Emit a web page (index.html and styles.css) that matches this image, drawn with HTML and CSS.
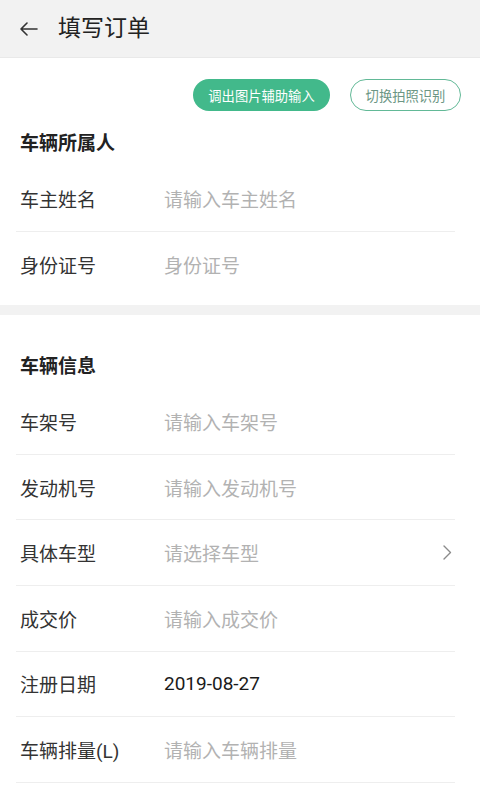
FILE: index.html
```html
<!DOCTYPE html>
<html lang="zh-CN">
<head>
<meta charset="utf-8">
<title>填写订单</title>
<link rel="stylesheet" href="styles.css">
</head>
<body>
<header class="topbar">
  <svg class="back" width="18" height="14" viewBox="0 0 18 14"><path d="M7 1 L1 7 L7 13 M1 7 H17" fill="none" stroke="#333" stroke-width="1.6" stroke-linecap="round" stroke-linejoin="round"/></svg>
  <h1 class="title">填写订单</h1>
</header>
<section class="card card-owner">
  <div class="actions">
    <button class="btn btn-fill">调出图片辅助输入</button>
    <button class="btn btn-line">切换拍照识别</button>
  </div>
  <h2 class="sec-title first">车辆所属人</h2>
  <div class="row"><span class="label">车主姓名</span><span class="ph">请输入车主姓名</span></div>
  <div class="row last"><span class="label">身份证号</span><span class="ph">身份证号</span></div>
</section>
<div class="band"></div>
<section class="card">
  <h2 class="sec-title">车辆信息</h2>
  <div class="row"><span class="label">车架号</span><span class="ph">请输入车架号</span></div>
  <div class="row"><span class="label">发动机号</span><span class="ph">请输入发动机号</span></div>
  <div class="row"><span class="label">具体车型</span><span class="ph">请选择车型</span>
    <svg class="chev" width="9" height="15" viewBox="0 0 9 15"><path d="M1 1 L7.5 7.5 L1 14" fill="none" stroke="#8a8a8a" stroke-width="1.4" stroke-linecap="round" stroke-linejoin="round"/></svg>
  </div>
  <div class="row"><span class="label">成交价</span><span class="ph">请输入成交价</span></div>
  <div class="row"><span class="label">注册日期</span><span class="val">2019-08-27</span></div>
  <div class="row"><span class="label">车辆排量(L)</span><span class="ph">请输入车辆排量</span></div>
</section>
</body>
</html>
```
FILE: styles.css
```css
* { box-sizing: border-box; }
html, body { margin: 0; padding: 0; }
body {
  width: 480px;
  height: 800px;
  overflow: hidden;
  background: #fff;
  font-family: Roboto, "Noto Sans CJK SC", sans-serif;
  color: #333;
}
.topbar {
  height: 58px;
  background: #f2f2f2;
  border-bottom: 1px solid #e9e9e9;
  display: flex;
  align-items: center;
  padding-left: 20px;
}
.back { display: block; margin-right: 20px; }
.title {
  margin: 0;
  font-size: 23px;
  font-weight: 400;
  color: #222;
  line-height: 28px;
}
.card { background: #fff; }
.card-owner { padding-bottom: 8px; }
.actions {
  display: flex;
  justify-content: flex-end;
  gap: 20px;
  padding: 21px 19px 0 0;
}
.btn {
  height: 32px;
  border-radius: 16px;
  font-family: inherit;
  font-size: 13.3px;
  padding: 0;
  display: flex;
  align-items: center;
  justify-content: center;
}
.btn-fill {
  width: 137px;
  background: #42b98b;
  border: none;
  color: #fff;
}
.btn-line {
  width: 111px;
  background: #fff;
  border: 1.5px solid #62b997;
  color: #6b9684;
}
.sec-title {
  margin: 0;
  font-size: 19px;
  font-weight: 700;
  color: #222;
  line-height: 24px;
  padding: 40px 0 10px 20px;
}
.sec-title.first { padding-top: 21px; }
.row {
  display: flex;
  align-items: center;
  height: 65.6px;
  margin: 0 25px 0 16px;
  padding: 0 3px 0 4px;
  border-bottom: 1px solid #eeeeee;
  font-size: 19px;
}
.row.last { border-bottom: none; }
.label { width: 144px; color: #333; flex: none; }
.ph { color: #b2b2b2; flex: 1; }
.val { color: #1a1a1a; flex: 1; }
.chev { display: block; flex: none; }
.band { height: 10px; background: #f2f2f2; }
```
